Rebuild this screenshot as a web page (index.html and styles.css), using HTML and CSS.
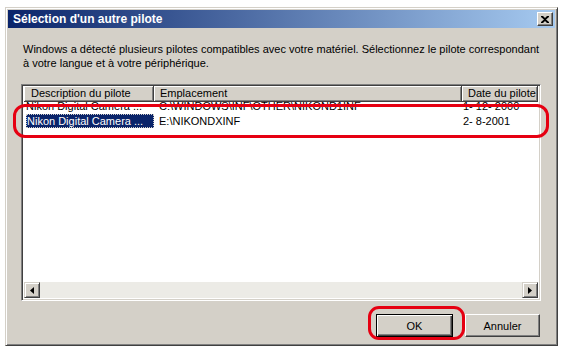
FILE: index.html
```html
<html>

<head>
    <title>Sélection d'un autre pilote</title>
    <link rel="stylesheet" href="styles.css">
</head>

<body>

    <div class="window">
        <div class="titlebar">
            <span class="title">Sélection d'un autre pilote</span>
            <span class="close">
                <svg width="8" height="7" viewBox="0 0 8 7">
                    <path d="M0 0h2l2 2 2-2h2v1L5 3.5 8 6v1H6L4 5 2 7H0V6l3-2.5L0 1z" fill="#000"/>
                </svg>
            </span>
        </div>

        <div class="content">
            <p class="intro">
                Windows a détecté plusieurs pilotes compatibles avec votre matériel. Sélectionnez le pilote correspondant
                à votre langue et à votre périphérique.
            </p>

            <div class="listbox">
                <div class="header">
                    <div class="col col-desc">Description du pilote</div>
                    <div class="col col-loc">Emplacement</div>
                    <div class="col col-date">Date du pilote</div>
                </div>

                <div class="rows">
                    <div class="row row-hidden">
                        <div class="cell col-desc"><span>Nikon Digital Camera ...</span></div>
                        <div class="cell col-loc">C:\WINDOWS\INF\OTHER\NIKOND1INF</div>
                        <div class="cell col-date">1- 12- 2000</div>
                    </div>
                    <div class="row">
                        <div class="cell col-desc"><span class="selected">Nikon Digital Camera ...</span></div>
                        <div class="cell col-loc">E:\NIKONDXINF</div>
                        <div class="cell col-date">2- 8-2001</div>
                    </div>
                </div>

                <div class="hscroll">
                    <div class="arrow">
                        <svg width="4" height="7" viewBox="0 0 4 7"><path d="M4 0v7L0 3.5z" fill="#000"/></svg>
                    </div>
                    <div class="track"></div>
                    <div class="arrow">
                        <svg width="4" height="7" viewBox="0 0 4 7"><path d="M0 0v7l4-3.5z" fill="#000"/></svg>
                    </div>
                </div>
            </div>

            <div class="buttons">
                <button class="btn default">OK</button>
                <button class="btn">Annuler</button>
            </div>
        </div>
    </div>

    <div class="mark mark-row"></div>
    <div class="mark mark-ok"></div>

</body>

</html>
```

FILE: styles.css
```css
body {
    margin: 0;
    background: #ffffff;
    font-family: "Liberation Sans", Arial, sans-serif;
    font-size: 11px;
    color: #000;
    position: relative;
}

.window {
    margin: 7px 0 0 5px;
    width: 553px;
    height: 339px;
    box-sizing: border-box;
    background: #d4d0c8;
    border: 1px solid;
    border-color: #d4d0c8 #404040 #404040 #d4d0c8;
    box-shadow: inset 1px 1px #ffffff, inset -1px -1px #808080;
    padding: 2px;
    display: flex;
    flex-direction: column;
}

.titlebar {
    height: 18px;
    background: linear-gradient(to right, #0a246a, #a6caf0);
    display: flex;
    align-items: center;
    justify-content: space-between;
    padding: 0 2px 0 5px;
}

.title {
    color: #ffffff;
    font-weight: bold;
    font-size: 12px;
}

.close {
    width: 16px;
    height: 14px;
    box-sizing: border-box;
    background: #d4d0c8;
    border: 1px solid;
    border-color: #ffffff #404040 #404040 #ffffff;
    box-shadow: inset -1px -1px #808080;
    display: flex;
    align-items: center;
    justify-content: center;
}

.content {
    flex: 1;
    display: flex;
    flex-direction: column;
    padding: 14px 13px 0 13px;
}

.intro {
    margin: 0 0 0 2px;
    line-height: 14px;
    height: 42px;
}

.listbox {
    width: 520px;
    height: 217px;
    box-sizing: border-box;
    background: #ffffff;
    border: 1px solid;
    border-color: #808080 #ffffff #ffffff #808080;
    box-shadow: inset 1px 1px #404040, inset -1px -1px #d4d0c8;
    padding: 2px;
    display: flex;
    flex-direction: column;
}

.header {
    display: flex;
    height: 16px;
    margin-top: -1px;
}

.col {
    box-sizing: border-box;
    background: #d4d0c8;
    border-right: 1px solid #404040;
    border-bottom: 1px solid #404040;
    box-shadow: inset 1px 1px #ffffff, inset -1px -1px #808080;
    padding: 0 0 0 7px;
    line-height: 14px;
    white-space: nowrap;
    overflow: hidden;
}

.col-desc {
    width: 130px;
}

.col-loc {
    width: 308px;
    padding-left: 6px;
}

.col-date {
    width: 76px;
    padding-left: 6px;
}

.rows {
    flex: 1;
}

.row {
    display: flex;
    height: 14px;
    line-height: 14px;
    position: relative;
}

.row-hidden {
    margin-top: -1px;
    height: 13px;
    line-height: 11px;
}

.row-hidden::after {
    content: "";
    position: absolute;
    left: 0;
    right: 0;
    top: 3px;
    border-top: 1px solid #303030;
}

.cell {
    box-sizing: border-box;
    white-space: nowrap;
    overflow: hidden;
    padding-left: 5px;
}

.cell.col-desc {
    padding-left: 2px;
}

.cell.col-date {
    padding-left: 1px;
}

.selected {
    display: inline-block;
    width: 127px;
    background: #0a246a;
    color: #ffffff;
    outline: 1px dotted #d4d0c8;
    outline-offset: -1px;
    padding-left: 1px;
}

.hscroll {
    display: flex;
    height: 16px;
}

.arrow {
    width: 16px;
    height: 16px;
    box-sizing: border-box;
    background: #d4d0c8;
    border: 1px solid;
    border-color: #d4d0c8 #404040 #404040 #d4d0c8;
    box-shadow: inset 1px 1px #ffffff, inset -1px -1px #808080;
    display: flex;
    align-items: center;
    justify-content: center;
}

.track {
    flex: 1;
    background: #ecebe6;
}

.buttons {
    display: flex;
    justify-content: flex-end;
    gap: 12px;
    padding: 13px 0 0 0;
    margin-right: 2px;
}

.btn {
    width: 75px;
    height: 23px;
    box-sizing: border-box;
    background: #d4d0c8;
    border: 1px solid;
    border-color: #ffffff #404040 #404040 #ffffff;
    box-shadow: inset -1px -1px #808080;
    font-family: "Liberation Sans", Arial, sans-serif;
    font-size: 11px;
    font-weight: normal;
    color: #000;
    padding: 0;
}

.btn.default {
    width: 77px;
    border: 1px solid #000;
    box-shadow: inset 1px 1px #ffffff, inset -1px -1px #404040, inset -2px -2px #808080;
}

.mark {
    position: absolute;
    border: 3px solid #e60012;
    box-sizing: border-box;
}

.mark-row {
    left: 13px;
    top: 104px;
    width: 536px;
    height: 34px;
    border-radius: 12px;
}

.mark-ok {
    left: 368px;
    top: 306px;
    width: 97px;
    height: 34px;
    border-radius: 11px;
}
```
